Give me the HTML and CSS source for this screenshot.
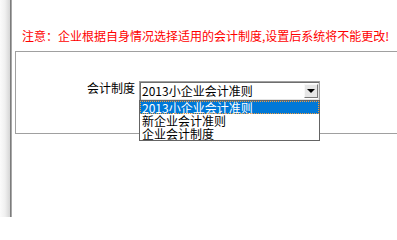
FILE: index.html
```html
<!DOCTYPE html>
<html lang="zh-CN">
<head>
<meta charset="utf-8">
<title>会计制度</title>
<link rel="stylesheet" href="styles.css">
</head>
<body>
<div class="page">
  <div class="edge"></div>
  <div class="divider"></div>
  <main class="content">
    <p class="notice">注意：企业根据自身情况选择适用的会计制度,设置后系统将不能更改!</p>
    <div class="panel">
      <div class="field">
        <span class="label">会计制度</span>
        <div class="select">
          <span class="select-value">2013小企业会计准则</span>
          <span class="select-btn"><span class="arrow"></span></span>
          <ul class="options">
            <li class="option selected">2013小企业会计准则</li>
            <li class="option">新企业会计准则</li>
            <li class="option">企业会计制度</li>
          </ul>
        </div>
      </div>
    </div>
  </main>
</div>
</body>
</html>
```

FILE: styles.css
```css
html, body {
  margin: 0;
  padding: 0;
  background: #ffffff;
}
body {
  font-family: "Noto Sans CJK SC", "Liberation Sans", sans-serif;
  font-size: 12px;
  color: #000;
}
.page {
  display: flex;
  height: 217px;
  overflow: hidden;
}
.edge {
  width: 10px;
  flex: none;
  background: linear-gradient(to right, #fbfbfb, #f0f0f0 50%, #d6d6d6);
}
.divider {
  width: 2px;
  flex: none;
  background: linear-gradient(to right, #7c7c7c 50%, #a8a8a8 50%);
}
.content {
  flex: 1;
  padding: 28px 0 0 3px;
  min-width: 0;
}
.notice {
  margin: 0 0 0 7px;
  line-height: 16px;
  height: 16px;
  color: #ff0000;
  white-space: nowrap;
}
.panel {
  margin-top: 7px;
  height: 83px;
  box-sizing: border-box;
  border: 1px solid #a0a0a0;
  border-right: none;
}
.field {
  display: flex;
  align-items: flex-start;
  gap: 4px;
  padding: 29px 0 0 71px;
}
.label {
  line-height: 14px;
  white-space: nowrap;
}
.select {
  position: relative;
  display: flex;
  width: 181px;
  height: 20px;
  box-sizing: border-box;
  border: 1px solid #a0a0a0;
  box-shadow: inset 1px 1px 0 #6e6e6e, inset -1px -1px 0 #e3e3e3;
  background: #fff;
  padding: 1px;
}
.select-value {
  flex: 1;
  line-height: 16px;
  padding-left: 1px;
  white-space: nowrap;
}
.select-btn {
  width: 14px;
  height: 14px;
  margin: 1px 0 0 0;
  box-sizing: border-box;
  background: #e6e6e6;
  border-top: 1px solid #f8f8f8;
  border-left: 1px solid #f8f8f8;
  border-right: 1px solid #7a7a7a;
  border-bottom: 1px solid #7a7a7a;
  display: flex;
  align-items: center;
  justify-content: center;
}
.arrow {
  width: 0;
  height: 0;
  border-left: 4px solid transparent;
  border-right: 4px solid transparent;
  border-top: 4px solid #000;
}
.options {
  position: absolute;
  top: 100%;
  left: -1px;
  width: 181px;
  box-sizing: border-box;
  margin: 0;
  padding: 0;
  list-style: none;
  background: #fff;
  border: 1px solid #646464;
}
.option {
  line-height: 13px;
  height: 13px;
  padding-left: 2px;
  white-space: nowrap;
}
.option.selected {
  background: #0078d7;
  color: #fff;
  outline: 1px dotted #f39c3c;
  outline-offset: -1px;
}
```
